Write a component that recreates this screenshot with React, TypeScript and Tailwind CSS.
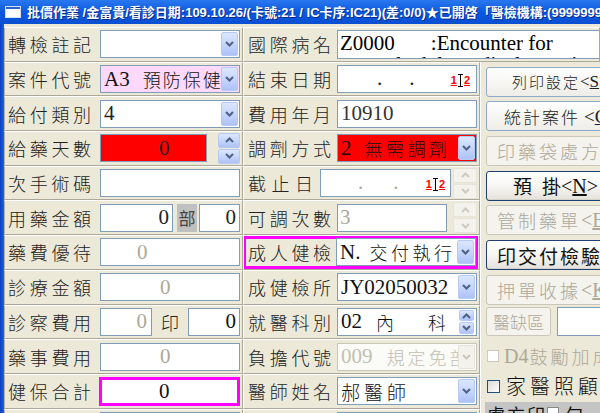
import React from "react";

const LBL =
  "shrink-0 whitespace-nowrap leading-none text-[18px] font-light tracking-[3.7px] text-[#222] font-['Noto_Sans_CJK_TC',sans-serif]";
const LAT = "leading-none text-[21px] font-['Liberation_Serif','Noto_Sans_CJK_TC',serif]";
const CJ = "leading-none text-[18px] font-light tracking-[2px] font-['Noto_Sans_CJK_TC',sans-serif]";
const LCELL =
  "flex items-center border-l border-l-[#b5b2a3] border-r border-r-[#aca899] border-t border-t-white border-b border-b-[#aca899] overflow-hidden";
const MCELL =
  "flex items-center border-l border-l-white border-r border-r-[#aca899] border-t border-t-white border-b border-b-[#aca899] overflow-hidden";

const BLUE_BTN = "border-[#b7c9f5] bg-linear-to-b from-[#dce6fd] via-[#c6d6fb] to-[#adc2f6]";
const GRAY_BTN = "border-[#e6e4d9] bg-[#f3f2ec]";

function Chevron({ up = false, color }: { up?: boolean; color: string }) {
  return (
    <svg width="9" height="6" viewBox="0 0 9 6" className="block">
      <path
        d={up ? "M1 5L4.5 1.5L8 5" : "M1 1L4.5 4.5L8 1"}
        fill="none"
        stroke={color}
        strokeWidth="2"
      />
    </svg>
  );
}

function ComboBtn({ disabled = false }: { disabled?: boolean }) {
  return (
    <div
      className={`my-px mr-px w-[17px] shrink-0 rounded-[2px] border flex items-center justify-center ${
        disabled ? GRAY_BTN : BLUE_BTN
      }`}
    >
      <Chevron color={disabled ? "#c9c7ba" : "#4d6185"} />
    </div>
  );
}

function Spin({ disabled = false, className = "" }: { disabled?: boolean; className?: string }) {
  const c = disabled ? GRAY_BTN : BLUE_BTN;
  const col = disabled ? "#cdcbbf" : "#4d6185";
  return (
    <div className={`flex flex-col gap-px shrink-0 ${className}`}>
      <div className={`flex-1 rounded-[2px] border flex items-center justify-center ${c}`}>
        <Chevron up color={col} />
      </div>
      <div className={`flex-1 rounded-[2px] border flex items-center justify-center ${c}`}>
        <Chevron color={col} />
      </div>
    </div>
  );
}

function Combo({
  className = "",
  disabled = false,
  children,
}: {
  className?: string;
  disabled?: boolean;
  children?: React.ReactNode;
}) {
  return (
    <div
      className={`h-[28px] shrink-0 border flex items-stretch overflow-hidden ${
        disabled ? "border-[#c9c7ba]" : "border-[#7f9db9]"
      } ${className}`}
    >
      <div className="flex-1 min-w-0 flex items-center pl-[3px] overflow-hidden whitespace-nowrap">{children}</div>
      <ComboBtn disabled={disabled} />
    </div>
  );
}

function Box({ className = "", children }: { className?: string; children?: React.ReactNode }) {
  return (
    <div
      className={`h-[28px] shrink-0 border border-[#7f9db9] flex items-center overflow-hidden whitespace-nowrap ${className}`}
    >
      {children}
    </div>
  );
}

function Marker() {
  return (
    <span className="flex items-center leading-none font-['Liberation_Sans',sans-serif] text-[11px] font-bold text-[#ff0000]">
      <span className="underline decoration-[#ff0000]">1</span>
      <svg width="5" height="13" viewBox="0 0 5 13" className="block mx-px">
        <path d="M0 0.5H5M2.5 0.5V12.5M0 12.5H5" stroke="#000" strokeWidth="1" fill="none" />
      </svg>
      <span className="underline decoration-[#ff0000]">2</span>
    </span>
  );
}

function XpButton({
  kind,
  className = "",
  children,
}: {
  kind: "light" | "dark" | "disabled";
  className?: string;
  children: React.ReactNode;
}) {
  const k =
    kind === "light"
      ? "border-[#8ea8d2] bg-linear-to-b from-white to-[#eeede7] text-[#222]"
      : kind === "dark"
      ? "border-[#1d3f73] bg-linear-to-b from-white via-[#f7f6f2] to-[#e2e1da] text-[#111] shadow-[inset_0_-1px_0_#d6d4c8]"
      : "border-[#c9c7ba] bg-[#f4f3ee] text-[#aca899]";
  return (
    <div
      className={`h-[30px] shrink-0 rounded-[3px] border flex items-center whitespace-nowrap overflow-hidden ${k} ${className}`}
    >
      {children}
    </div>
  );
}

export default function App() {
  return (
    <div className="w-[600px] h-[413px] overflow-hidden bg-[#ece9d8] flex flex-col select-none">
      {/* Title bar */}
      <div className="h-[24px] shrink-0 flex items-center bg-linear-to-b from-[#2a78ef] via-[#0a58df] to-[#0a4fd2]">
        <div className="ml-[5px] w-[16px] h-[12px] shrink-0 bg-white border border-[#d6e0f2] flex flex-col">
          <div className="h-[2px] bg-[#2a62d0]" />
        </div>
        <span className="ml-[6px] whitespace-nowrap text-white font-bold text-[13px] leading-none font-['Liberation_Sans','Noto_Sans_CJK_TC',sans-serif] [text-shadow:1px_1px_0_#0a2a8a]">
          批價作業 /金富貴/看診日期:109.10.26/(卡號:21 / IC卡序:IC21)(差:0/0)★已開啓「醫檢機構:(99999999
        </span>
      </div>

      <div className="flex flex-1 min-h-0">
        <div className="w-[4px] shrink-0 bg-linear-to-r from-[#0a3fbf] to-[#1d62e0]" />
        <div className="flex-1 min-w-0 pt-[3px] grid grid-cols-[239px_237px_120px] grid-rows-[repeat(12,34.7px)] overflow-hidden">
          {/* Right column */}
          <div className="col-start-3 row-start-2 row-span-11 flex flex-col pl-[5px] pt-[5px] overflow-hidden border-l border-l-white">
            <XpButton kind="light" className="w-[150px] pl-[25px]">
              <span className="leading-none text-[15px] font-light tracking-[2px] font-['Noto_Sans_CJK_TC',sans-serif]">列印設定</span>
              <span className="leading-none text-[17px] font-['Liberation_Serif',serif]">
                &lt;<span className="underline">S</span>&gt;
              </span>
            </XpButton>
            <XpButton kind="light" className="w-[150px] pl-[17px] mt-[4.7px]">
              <span className="leading-none text-[17px] font-light tracking-[2px] font-['Noto_Sans_CJK_TC',sans-serif]">統計案件</span>
              <span className="ml-[4px] leading-none text-[19px] font-['Liberation_Serif',serif]">
                &lt;<span className="underline">C</span>&gt;
              </span>
            </XpButton>
            <XpButton kind="disabled" className="w-[150px] pl-[10px] mt-[4.7px]">
              <span className="leading-none text-[18px] font-light tracking-[3px] font-['Noto_Sans_CJK_TC',sans-serif]">印藥袋處方箋</span>
            </XpButton>
            <XpButton kind="dark" className="w-[150px] pl-[26px] mt-[4.7px]">
              <span className="leading-none text-[19px] font-['Noto_Sans_CJK_TC',sans-serif]">預</span>
              <span className="ml-[10px] leading-none text-[19px] font-['Noto_Sans_CJK_TC',sans-serif]">掛</span>
              <span className="leading-none text-[20px] font-['Liberation_Serif',serif]">
                &lt;<span className="underline">N</span>&gt;
              </span>
            </XpButton>
            <XpButton kind="disabled" className="w-[150px] pl-[10px] mt-[4.7px]">
              <span className="leading-none text-[18px] font-light tracking-[3px] font-['Noto_Sans_CJK_TC',sans-serif]">管制藥單</span>
              <span className="leading-none text-[20px] font-['Liberation_Serif',serif]">
                &lt;<span className="underline">E</span>&gt;
              </span>
            </XpButton>
            <XpButton kind="dark" className="w-[150px] pl-[10px] mt-[4.7px]">
              <span className="leading-none text-[19px] tracking-[2px] font-['Noto_Sans_CJK_TC',sans-serif]">印交付檢驗單</span>
            </XpButton>
            <XpButton kind="disabled" className="w-[150px] pl-[10px] mt-[4.7px]">
              <span className="leading-none text-[18px] font-light tracking-[3px] font-['Noto_Sans_CJK_TC',sans-serif]">押單收據</span>
              <span className="leading-none text-[20px] font-['Liberation_Serif',serif]">
                &lt;<span className="underline">K</span>&gt;
              </span>
            </XpButton>
            <div className="flex items-center mt-[2.5px] h-[29px] shrink-0">
              <div className="w-[65px] h-[29px] shrink-0 rounded-[3px] border border-[#c9c7ba] bg-[#f4f3ee] flex items-center justify-center whitespace-nowrap">
                <span className="leading-none text-[17px] font-light text-[#aca899] font-['Noto_Sans_CJK_TC',sans-serif]">醫缺區</span>
              </div>
              <div className="ml-[6px] w-[60px] h-[29px] shrink-0 border border-[#7f9db9] bg-white" />
            </div>
            <div className="flex items-center mt-[10px] h-[20px] shrink-0 pl-[1px] whitespace-nowrap">
              <div className="w-[12px] h-[12px] shrink-0 border border-[#cdcbbf] bg-white" />
              <span className="ml-[5px] leading-none text-[20px] text-[#aca899] font-['Liberation_Serif',serif]">D4</span>
              <span className="ml-[1px] leading-none text-[18px] font-light tracking-[3px] text-[#aca899] font-['Noto_Sans_CJK_TC',sans-serif]">鼓勵加成</span>
            </div>
            <div className="flex items-center mt-[10px] h-[20px] shrink-0 pl-[1px] whitespace-nowrap">
              <div className="w-[13px] h-[13px] shrink-0 border border-[#1c5180] bg-linear-to-br from-[#dcdbd5] to-white" />
              <span className="ml-[6px] leading-none text-[20px] font-light tracking-[4px] text-[#111] font-['Noto_Sans_CJK_TC',sans-serif]">家醫照顧</span>
            </div>
            <div className="mt-[6px] h-[30px] shrink-0 -ml-[1px] bg-[#c4c4c4] flex items-start pt-[3px] pl-[2px] whitespace-nowrap overflow-hidden">
              <span className="leading-none text-[18px] tracking-[2px] text-[#111] font-['Noto_Sans_CJK_TC',sans-serif]">處方印</span>
              <div className="mt-[2px] w-[12px] h-[12px] shrink-0 border border-[#888] bg-white" />
              <span className="ml-[6px] leading-none text-[18px] text-[#111] font-['Noto_Sans_CJK_TC',sans-serif]">句</span>
            </div>
          </div>

          {/* Row 1 */}
          <div className={LCELL}>
            <span className={`${LBL} w-[95px] pl-[3px]`}>轉檢註記</span>
            <Combo className="w-[140px] bg-white" />
          </div>
          <div className={`${MCELL} col-span-2`}>
            <span className={`${LBL} w-[93px] pl-[4px]`}>國際病名</span>
            <div className="w-[270px] h-[29px] shrink-0 border border-[#7f9db9] bg-white overflow-hidden pl-[2px] whitespace-nowrap">
              <div className="h-[21px] mt-[2px] flex items-center">
                <span className={LAT}>Z0000</span>
                <span className={`${LAT} ml-[36px]`}>:Encounter for</span>
              </div>
              <div className="h-[21px] flex items-center">
                <span className={LAT}>general adult medical examination</span>
              </div>
            </div>
          </div>

          {/* Row 2 */}
          <div className={LCELL}>
            <span className={`${LBL} w-[95px] pl-[3px]`}>案件代號</span>
            <Combo className="w-[140px] bg-[#ffd9fb]">
              <span className={`${LAT} text-[#111]`}>A3</span>
              <span className={`${CJ} ml-[13px] text-[#111]`}>預防保健</span>
            </Combo>
          </div>
          <div className={MCELL}>
            <span className={`${LBL} w-[93px] pl-[4px]`}>結束日期</span>
            <Box className="w-[140px] bg-white">
              <span className={`${LAT} self-end mb-[3px] ml-[39px] text-[#222]`}>.</span>
              <span className={`${LAT} self-end mb-[3px] ml-[27px] text-[#222]`}>.</span>
              <span className="ml-auto mr-[6px] mt-[2px]">
                <Marker />
              </span>
            </Box>
          </div>

          {/* Row 3 */}
          <div className={LCELL}>
            <span className={`${LBL} w-[95px] pl-[3px]`}>給付類別</span>
            <Combo className="w-[140px] bg-white">
              <span className={`${LAT} text-[#222]`}>4</span>
            </Combo>
          </div>
          <div className={MCELL}>
            <span className={`${LBL} w-[93px] pl-[4px]`}>費用年月</span>
            <Box className="w-[140px] bg-white pl-[3px]">
              <span className={`${LAT} text-[#333]`}>10910</span>
            </Box>
          </div>

          {/* Row 4 */}
          <div className={LCELL}>
            <span className={`${LBL} w-[95px] pl-[3px]`}>給藥天數</span>
            <Box className="w-[107px] bg-[#ff0000] pl-[58px]">
              <span className={`${LAT} text-[#222]`}>0</span>
            </Box>
            <Spin className="w-[22px] h-[31px] ml-[11px]" />
          </div>
          <div className={MCELL}>
            <span className={`${LBL} w-[93px] pl-[4px]`}>調劑方式</span>
            <Combo className="w-[140px] bg-[#ff0000]">
              <span className={`${LAT} text-[#111]`}>2</span>
              <span className={`${CJ} ml-[13px] tracking-[3.5px] text-[#111]`}>無需調劑</span>
            </Combo>
          </div>

          {/* Row 5 */}
          <div className={LCELL}>
            <span className={`${LBL} w-[95px] pl-[3px]`}>次手術碼</span>
            <Box className="w-[140px] bg-white" />
          </div>
          <div className={MCELL}>
            <span className={`${LBL} w-[76px] pl-[4px] tracking-[5.5px]`}>截止日</span>
            <Box className="w-[131px] bg-white">
              <span className={`${LAT} self-end mb-[3px] ml-[37px] text-[#aca899]`}>.</span>
              <span className={`${LAT} self-end mb-[3px] ml-[30px] text-[#aca899]`}>.</span>
              <span className="ml-auto mr-[5px] mt-[2px]">
                <Marker />
              </span>
            </Box>
            <Spin disabled className="w-[24px] h-[31px] ml-[2px]" />
          </div>

          {/* Row 6 */}
          <div className={LCELL}>
            <span className={`${LBL} w-[95px] pl-[3px]`}>用藥金額</span>
            <Box className="w-[73px] bg-white justify-end pr-[3px]">
              <span className={`${LAT} text-[#222]`}>0</span>
            </Box>
            <div className="w-[20px] h-[28px] ml-[4px] shrink-0 bg-[#c0c0c0] flex items-center justify-center">
              <span className="leading-none text-[17px] text-[#444] font-['Noto_Sans_CJK_TC',sans-serif]">部</span>
            </div>
            <Box className="w-[41px] ml-[2px] bg-white justify-end pr-[3px]">
              <span className={`${LAT} text-[#222]`}>0</span>
            </Box>
          </div>
          <div className={MCELL}>
            <span className={`${LBL} w-[93px] pl-[4px]`}>可調次數</span>
            <Box className="w-[110px] bg-white pl-[2px]">
              <span className={`${LAT} text-[#aca899]`}>3</span>
            </Box>
            <Spin disabled className="w-[24px] h-[31px] ml-[6px]" />
          </div>

          {/* Row 7 */}
          <div className={LCELL}>
            <span className={`${LBL} w-[95px] pl-[3px]`}>藥費優待</span>
            <Box className="w-[140px] bg-white pl-[36px]">
              <span className={`${LAT} text-[#aca899]`}>0</span>
            </Box>
          </div>
          <div className={MCELL}>
            <div className="w-full h-[33px] -ml-px border-[3px] border-[#ff00ff] flex items-center">
              <span className={`${LBL} w-[90px] pl-[2px] text-[#2b2bf2]`}>成人健檢</span>
              <Combo className="w-[140px] bg-white">
                <span className={`${LAT} text-[#111]`}>N.</span>
                <span className={`${CJ} ml-[9px] tracking-[3.5px] text-[#111]`}>交付執行</span>
              </Combo>
            </div>
          </div>

          {/* Row 8 */}
          <div className={LCELL}>
            <span className={`${LBL} w-[95px] pl-[3px]`}>診療金額</span>
            <Box className="w-[140px] bg-white pl-[59px]">
              <span className={`${LAT} text-[#aca899]`}>0</span>
            </Box>
          </div>
          <div className={MCELL}>
            <span className={`${LBL} w-[93px] pl-[4px] text-[#2b2bf2]`}>成健檢所</span>
            <Combo className="w-[140px] bg-white">
              <span className={`${LAT} text-[#111]`}>JY02050032</span>
            </Combo>
          </div>

          {/* Row 9 */}
          <div className={LCELL}>
            <span className={`${LBL} w-[95px] pl-[3px]`}>診察費用</span>
            <Box className="w-[52px] bg-white justify-end pr-[4px]">
              <span className={`${LAT} text-[#aca899]`}>0</span>
            </Box>
            <span className="w-[36px] shrink-0 text-center leading-none text-[18px] font-light text-[#222] font-['Noto_Sans_CJK_TC',sans-serif]">印</span>
            <Box className="w-[52px] bg-white justify-end pr-[3px]">
              <span className={`${LAT} text-[#111]`}>0</span>
            </Box>
          </div>
          <div className={MCELL}>
            <span className={`${LBL} w-[93px] pl-[4px]`}>就醫科別</span>
            <Box className="w-[140px] bg-white pl-[3px]">
              <span className={`${LAT} text-[#111]`}>02</span>
              <span className={`${CJ} ml-[14px] text-[#111]`}>內</span>
              <span className={`${CJ} ml-[32px] text-[#111]`}>科</span>
              <Spin className="ml-auto mr-[2px] w-[15px] h-[24px]" />
            </Box>
          </div>

          {/* Row 10 */}
          <div className={LCELL}>
            <span className={`${LBL} w-[95px] pl-[3px]`}>藥事費用</span>
            <Box className="w-[140px] bg-white pl-[59px]">
              <span className={`${LAT} text-[#aca899]`}>0</span>
            </Box>
          </div>
          <div className={MCELL}>
            <span className={`${LBL} w-[93px] pl-[4px]`}>負擔代號</span>
            <Combo disabled className="w-[140px] bg-[#fbfbf8]">
              <span className={`${LAT} text-[#c2bfb0]`}>009</span>
              <span className={`${CJ} ml-[14px] tracking-[3px] text-[#c2bfb0]`}>規定免部</span>
            </Combo>
          </div>

          {/* Row 11 */}
          <div className={LCELL}>
            <span className={`${LBL} w-[95px] pl-[3px]`}>健保合計</span>
            <div className="w-[141px] h-[29px] -ml-px shrink-0 border-[3px] border-[#ff00ff] bg-white flex items-center pl-[57px]">
              <span className={`${LAT} text-[#111]`}>0</span>
            </div>
          </div>
          <div className={MCELL}>
            <span className={`${LBL} w-[93px] pl-[4px]`}>醫師姓名</span>
            <Combo className="w-[140px] bg-white">
              <span className={`${CJ} text-[19px] tracking-[4px] text-[#111]`}>郝醫師</span>
            </Combo>
          </div>

          {/* Row 12 (cut off at the window edge) */}
          <div className={LCELL}>
            <span className="w-[95px] shrink-0" />
            <Box className="w-[140px] bg-white" />
          </div>
          <div className={MCELL}>
            <span className="w-[93px] shrink-0" />
            <Combo className="w-[140px] bg-white" />
          </div>
        </div>
      </div>
    </div>
  );
}
